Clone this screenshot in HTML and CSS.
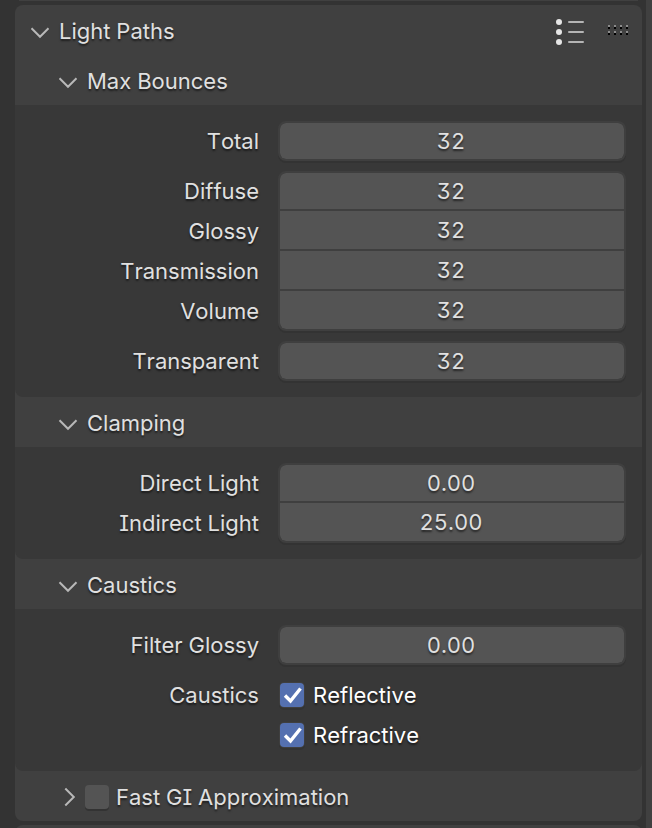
FILE: index.html
```
<!DOCTYPE html>
<html lang="en">
<head>
<meta charset="utf-8">
<title>Light Paths</title>
<link rel="stylesheet" href="styles.css">
</head>
<body>
<div class="editor">
<main class="column">
  <div class="panel-end"></div>
  <section class="panel">
    <header class="head">
      <svg class="chevron" width="20" height="20" viewBox="0 0 20 20"><path d="M1.500 6.300 10 14.800l8.500-8.500"/></svg>
      <h1 class="title">Light Paths</h1>
      <svg class="presets" width="28" height="28" viewBox="0 0 28 28"><g class="dots"><circle cx="3" cy="4" r="3"/><circle cx="3" cy="14" r="3"/><circle cx="3" cy="24" r="3"/></g><path d="M13 4h14M13 14h14M13 24h14"/></svg>
      <svg class="grip" width="20" height="10" viewBox="0 0 20 10" shape-rendering="crispEdges"><path class="dark" d="M0 3h20M0 9h20"/><path d="M0 1h20M0 7h20"/></svg>
    </header>
    <header class="head sub">
      <svg class="chevron" width="20" height="20" viewBox="0 0 20 20"><path d="M1.500 6.300 10 14.800l8.500-8.500"/></svg>
      <h2 class="title">Max Bounces</h2>
    </header>
    <div class="body">
      <div class="group">
        <div class="labels"><span>Total</span></div>
        <div class="fields"><div class="field">32</div></div>
      </div>
      <div class="group">
        <div class="labels"><span>Diffuse</span><span>Glossy</span><span>Transmission</span><span>Volume</span></div>
        <div class="fields"><div class="field">32</div><div class="field">32</div><div class="field">32</div><div class="field">32</div></div>
      </div>
      <div class="group">
        <div class="labels"><span>Transparent</span></div>
        <div class="fields"><div class="field">32</div></div>
      </div>
    </div>
    <header class="head sub">
      <svg class="chevron" width="20" height="20" viewBox="0 0 20 20"><path d="M1.500 6.300 10 14.800l8.500-8.500"/></svg>
      <h2 class="title">Clamping</h2>
    </header>
    <div class="body">
      <div class="group">
        <div class="labels"><span>Direct Light</span><span>Indirect Light</span></div>
        <div class="fields"><div class="field">0.00</div><div class="field">25.00</div></div>
      </div>
    </div>
    <header class="head sub">
      <svg class="chevron" width="20" height="20" viewBox="0 0 20 20"><path d="M1.500 6.300 10 14.800l8.500-8.500"/></svg>
      <h2 class="title">Caustics</h2>
    </header>
    <div class="body">
      <div class="group">
        <div class="labels"><span>Filter Glossy</span></div>
        <div class="fields"><div class="field">0.00</div></div>
      </div>
      <div class="group">
        <div class="labels"><span>Caustics</span></div>
        <div class="checks">
          <div class="option"><span class="box on"><svg width="24" height="24" viewBox="0 0 24 24"><path d="M5 12.500 10.500 18 20.500 5.500"/></svg></span>Reflective</div>
          <div class="option"><span class="box on"><svg width="24" height="24" viewBox="0 0 24 24"><path d="M5 12.500 10.500 18 20.500 5.500"/></svg></span>Refractive</div>
        </div>
      </div>
    </div>
    <header class="head sub last">
      <svg class="chevron" width="20" height="20" viewBox="0 0 20 20"><path d="M7.300 1.500l8.500 8.500-8.500 8.500"/></svg>
      <span class="box"></span>
      <h2 class="title">Fast GI Approximation</h2>
    </header>
  </section>
  <div class="panel-start"></div>
</main>
<div class="scrollbar"></div>
</div>
</body>
</html>
```
FILE: styles.css
```
* { box-sizing: border-box; }
body {
  margin: 0;
  background: #333;
  color: #e0e0e0;
  font: 400 22px/40px Inter, "Liberation Sans", sans-serif;
  font-feature-settings: "cv08", "cv09", "tnum";
  font-kerning: none;
  text-shadow: 0 2px 2px rgba(0, 0, 0, .55);
}
.editor { display: flex; height: 828px; overflow: hidden; }
.column { width: 627px; margin-left: 15px; }
.scrollbar { width: 6px; margin-left: 4px; background: #404040; }
.panel-end { height: 1px; margin: 0 4px 4px; background: #404040; }
.panel-start { height: 12px; margin-top: 4px; border-radius: 8px 8px 0 0; background: #404040; }
.panel { height: 816px; border-radius: 8px; background: #404040; overflow: hidden; }
.head { display: flex; align-items: center; height: 50px; padding: 0 14px 0 15px; }
.head.sub { padding-left: 43px; }
.title { margin: 2px 0 0 9px; font-size: 22px; font-weight: 400; line-height: 40px; white-space: nowrap; }
svg { display: block; flex: none; fill: none; }
.chevron { margin-top: 4px; stroke: #b8b8b8; stroke-width: 2; }
.presets { margin: 4px 24px 0 auto; stroke: #b4b4b4; stroke-width: 2; stroke-linecap: round; }
.dots { fill: #e6e6e6; stroke: none; }
.grip { stroke: #8c8c8c; stroke-width: 2; stroke-dasharray: 2 4; }
.grip .dark { stroke: #000; }
.body { display: flex; flex-direction: column; gap: 10px; padding: 16px; background: #383838; border-radius: 0 0 8px 8px; }
.group { display: grid; grid-template-columns: 228px 348px; column-gap: 19px; }
.labels { display: flex; flex-direction: column; text-align: right; height: 0; }
.fields { border: 2px solid #3f3f3f; border-radius: 8px; background: #3f3f3f; box-shadow: 0 2px 0 #333; display: grid; gap: 2px; overflow: hidden; }
.field { height: 38px; line-height: 39px; text-align: center; background: #545454; padding-right: 2px; }
.field:first-child { height: 36px; border-radius: 6px 6px 0 0; line-height: 37px; }
.field:last-child { border-bottom-left-radius: 6px; border-bottom-right-radius: 6px; }
.option { display: flex; align-items: center; height: 40px; padding-left: 2px; color: #fff; }
.box { display: block; flex: none; width: 24px; height: 24px; border-radius: 4px; background: #545454; box-shadow: 0 2px 0 #333; }
.box.on { background: #5470b0; margin-right: 9px; box-shadow: 0 0 0 1px #3f3f3f, 0 2px 0 1px #333; }
.box.on svg { stroke: #fff; stroke-width: 3.400; }
.last .box { margin: 2px 0 0 7px; }
.last .title { margin-left: 7px; }
.last .chevron { margin-top: 2px; }
```
